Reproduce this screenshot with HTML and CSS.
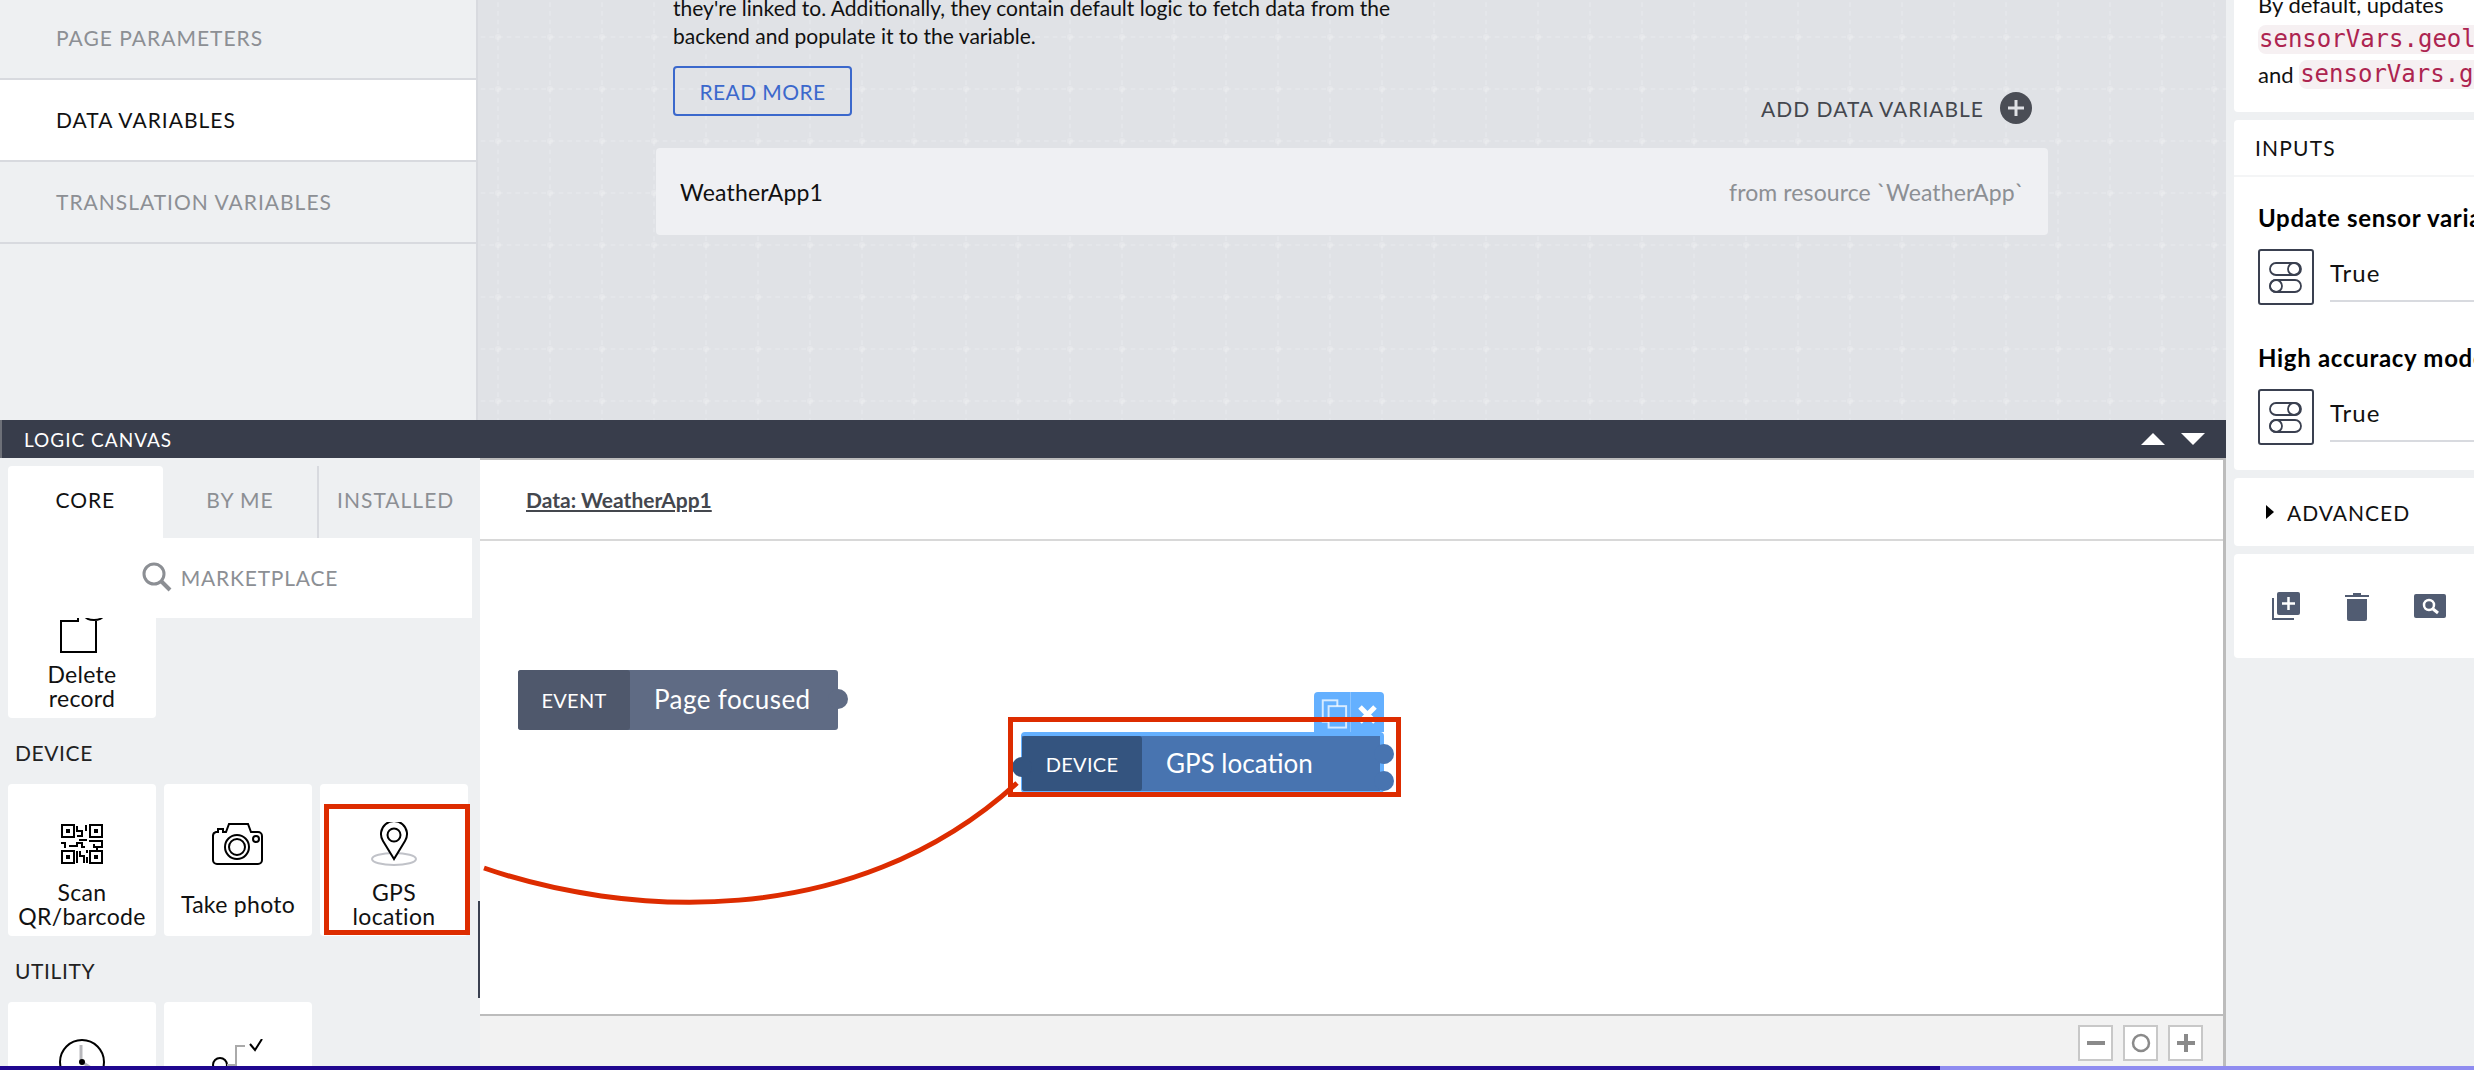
FILE: index.html
```html
<!DOCTYPE html>
<html lang="en">
<head>
    <meta charset="UTF-8">
    <title>Logic canvas</title>
    <link rel="stylesheet" href="styles.css">
</head>
<body>
<div class="app">
    <div class="main-col">
        <div class="top-area">
            <div class="sidebar">
                <div class="side-row">Page parameters</div>
                <div class="side-row active">Data variables</div>
                <div class="side-row">Translation variables</div>
            </div>
            <div class="content">
                <p class="intro">they're linked to. Additionally, they contain default logic to fetch data from the<br>backend and populate it to the variable.</p>
                <a class="read-more">READ MORE</a>
                <div class="add-var">
                    <span>ADD DATA VARIABLE</span>
                    <svg width="32" height="32" viewBox="0 0 32 32"><circle cx="16" cy="16" r="16" fill="#4a4d55"/><path d="M16 8v16M8 16h16" stroke="#e0e2e6" stroke-width="3"/></svg>
                </div>
                <div class="var-row">
                    <span class="var-name">WeatherApp1</span>
                    <span class="var-from">from resource `WeatherApp`</span>
                </div>
            </div>
        </div>

        <div class="logic-head">
            <span>LOGIC CANVAS</span>
            <div class="head-arrows"><i class="tri-up"></i><i class="tri-down"></i></div>
        </div>

        <div class="logic-body">
            <div class="palette">
                <div class="tabs">
                    <div class="tab current">CORE</div>
                    <div class="tab">BY ME</div>
                    <div class="tab sep">INSTALLED</div>
                </div>
                <div class="market">
                    <svg width="30" height="30" viewBox="0 0 30 30"><circle cx="12" cy="12" r="10" fill="none" stroke="#8c8f94" stroke-width="3"/><path d="M19 19l9 9" stroke="#8c8f94" stroke-width="4"/></svg>
                    <span>MARKETPLACE</span>
                </div>
                <div class="pal-list">
                    <div class="cards first">
                        <div class="card">
                            <div class="card-icon">
                                <svg width="44" height="54" viewBox="0 0 44 54" fill="none" stroke="#000" stroke-width="2"><path d="M18 16v6H1v31h35V22"/><path d="M25 17a9 4 0 0 0 18 0"/></svg>
                            </div>
                            <div class="card-label">Delete<br>record</div>
                        </div>
                    </div>
                    <div class="pal-title">DEVICE</div>
                    <div class="cards">
                        <div class="card">
                            <div class="card-icon">
                                <svg width="42" height="40" viewBox="0 0 42 40" fill="none" stroke="#000" stroke-width="2">
                                    <rect x="1" y="1" width="12" height="12"/><rect x="29" y="1" width="12" height="12"/><rect x="1" y="27" width="12" height="12"/><rect x="29" y="27" width="12" height="12"/>
                                    <path d="M5 5h4v4H5zM33 5h4v4h-4zM5 31h4v4H5zM33 31h4v4h-4z" fill="#000" stroke="none"/>
                                    <path d="M16 2v5h5v5h-5M25 1v6M18 16h8M0 19h4v5M8 22h8v-3h5v4h3M28 17h13v6h-8v-3M36 23v3M16 27v12M19 27v5h4v7M26 26v3M26 33v6"/>
                                </svg>
                            </div>
                            <div class="card-label">Scan<br>QR/barcode</div>
                        </div>
                        <div class="card">
                            <div class="card-icon">
                                <svg width="52" height="42" viewBox="0 0 52 42" fill="none" stroke="#000" stroke-width="2">
                                    <path d="M4 9h2V6h5v3h3l3-8h19l3 8h7a4 4 0 0 1 4 4v24a4 4 0 0 1-4 4H5a4 4 0 0 1-4-4V13a4 4 0 0 1 3-4z"/>
                                    <circle cx="25" cy="24" r="12"/><circle cx="25" cy="24" r="8"/><circle cx="44" cy="16" r="3"/>
                                </svg>
                            </div>
                            <div class="card-label">Take photo</div>
                        </div>
                        <div class="card">
                            <div class="card-icon">
                                <svg width="46" height="44" viewBox="0 0 46 44" fill="none">
                                    <ellipse cx="23" cy="37" rx="22" ry="6" stroke="#c0c2c8" stroke-width="2"/>
                                    <path d="M23 37L12 19a13 13 0 1 1 22 0z" fill="#fff" stroke="#000" stroke-width="2"/>
                                    <circle cx="23" cy="13" r="6.5" stroke="#000" stroke-width="2"/>
                                </svg>
                            </div>
                            <div class="card-label">GPS<br>location</div>
                        </div>
                    </div>
                    <div class="pal-title">UTILITY</div>
                    <div class="cards">
                        <div class="card">
                            <div class="card-icon">
                                <svg width="46" height="46" viewBox="0 0 46 46" fill="none"><circle cx="23" cy="23" r="22" stroke="#000" stroke-width="2"/><path d="M22 6v17" stroke="#b8b8bc" stroke-width="3"/><path d="M23 23l12 8" stroke="#b8b8bc" stroke-width="3"/><circle cx="23" cy="23" r="3" fill="#000"/></svg>
                            </div>
                            <div class="card-label"></div>
                        </div>
                        <div class="card">
                            <div class="card-icon">
                                <svg width="52" height="46" viewBox="0 0 52 46" fill="none"><circle cx="8" cy="26" r="7" stroke="#000" stroke-width="2"/><path d="M15 26h9V7h9" stroke="#aaa" stroke-width="2"/><path d="M38 5l5 6 7-11" stroke="#000" stroke-width="2"/></svg>
                            </div>
                            <div class="card-label"></div>
                        </div>
                    </div>
                </div>
                <div class="pal-scroll"></div>
            </div>

            <div class="canvas">
                <div class="crumb"><a>Data: WeatherApp1</a></div>
                <div class="board">
                    <div class="node node-event">
                        <div class="node-type">EVENT</div>
                        <div class="node-name">Page focused</div>
                        <i class="port port-out"></i>
                    </div>
                    <div class="node-wrap">
                        <div class="node-tools">
                            <svg width="37" height="40" viewBox="0 0 37 40" fill="none" stroke="#fff" stroke-opacity=".75" stroke-width="2"><rect x="9" y="8" width="15" height="22"/><rect x="15" y="14" width="18" height="22" fill="#64b0ff"/></svg>
                            <svg width="33" height="40" viewBox="0 0 33 40"><path d="M9 15l15 15M24 15L9 30" stroke="#fff" stroke-width="5"/></svg>
                        </div>
                        <div class="node node-device">
                            <i class="port port-in"></i>
                            <div class="node-type">DEVICE</div>
                            <div class="node-name">GPS location</div>
                            <i class="port port-a"></i>
                            <i class="port port-b"></i>
                        </div>
                    </div>
                </div>
                <div class="zoom-bar">
                    <button class="zoom-btn"><svg width="20" height="20" viewBox="0 0 20 20"><path d="M1 10h18" stroke="#8a8a8a" stroke-width="4"/></svg></button>
                    <button class="zoom-btn"><svg width="20" height="20" viewBox="0 0 20 20"><circle cx="10" cy="10" r="8" fill="none" stroke="#8a8a8a" stroke-width="2.5"/></svg></button>
                    <button class="zoom-btn"><svg width="20" height="20" viewBox="0 0 20 20"><path d="M1 10h18M10 1v18" stroke="#8a8a8a" stroke-width="4"/></svg></button>
                </div>
            </div>
        </div>
    </div>

    <div class="props">
        <div class="prop-card doc">
            <div class="doc-line">By default, updates</div>
            <div class="doc-line"><code>sensorVars.geolocationLatitude</code></div>
            <div class="doc-line">and <code>sensorVars.geolocationLongitude</code></div>
        </div>
        <div class="prop-card">
            <div class="prop-head">INPUTS</div>
            <div class="inputs">
                <div class="field-title">Update sensor variables</div>
                <div class="field">
                    <span class="bind-btn"><svg width="34" height="34" viewBox="0 0 34 34" fill="none" stroke="#3a4050" stroke-width="1.8"><rect x="1" y="3" width="31" height="12" rx="6"/><circle cx="25" cy="9" r="6"/><rect x="1" y="20" width="31" height="12" rx="6"/><circle cx="7" cy="26" r="6"/></svg></span>
                    <span class="field-val">True</span>
                </div>
                <div class="field-title second">High accuracy mode</div>
                <div class="field">
                    <span class="bind-btn"><svg width="34" height="34" viewBox="0 0 34 34" fill="none" stroke="#3a4050" stroke-width="1.8"><rect x="1" y="3" width="31" height="12" rx="6"/><circle cx="25" cy="9" r="6"/><rect x="1" y="20" width="31" height="12" rx="6"/><circle cx="7" cy="26" r="6"/></svg></span>
                    <span class="field-val">True</span>
                </div>
            </div>
        </div>
        <div class="prop-card advanced"><i class="tri-right"></i>ADVANCED</div>
        <div class="prop-card actions">
            <svg width="28" height="28" viewBox="0 0 28 28"><path d="M1 6v21h21" fill="none" stroke="#515c72" stroke-width="2"/><rect x="5" y="0" width="23" height="23" rx="2" fill="#515c72"/><path d="M16.500 5v13M10 11.500h13" stroke="#fff" stroke-width="2.500"/></svg>
            <svg width="24" height="30" viewBox="0 0 24 30"><path d="M0 4h24v2H0zM8 2h8v2H8z" fill="#515c72"/><path d="M2 8h20v20a2 2 0 0 1-2 2H4a2 2 0 0 1-2-2z" fill="#515c72"/></svg>
            <svg width="32" height="24" viewBox="0 0 32 24"><rect width="32" height="24" rx="2" fill="#515c72"/><circle cx="15" cy="11" r="5" fill="none" stroke="#fff" stroke-width="2.500"/><path d="M19 15l5 4" stroke="#fff" stroke-width="3"/></svg>
        </div>
    </div>
</div>

<!-- tutorial annotations drawn over the app -->
<div class="mark mark-gps"></div>
<div class="mark mark-node"></div>
<svg class="mark-line" width="2474" height="1070" viewBox="0 0 2474 1070"><path d="M484 868C620 915 850 935 1017 783" fill="none" stroke="#dd2c00" stroke-width="5"/></svg>
<div class="load-bar"></div>
</body>
</html>
```

FILE: styles.css
```css
* {
    box-sizing: border-box;
}

html, body {
    margin: 0;
    height: 100%;
    overflow: hidden;
}

body {
    font-family: 'Lato', 'Liberation Sans', sans-serif;
    font-size: 21px;
    color: #111;
    background-color: #eef0f2;
    position: relative;
}

.app {
    display: flex;
    width: 2474px;
    height: 1070px;
}

.main-col {
    width: 2226px;
    display: flex;
    flex-direction: column;
    flex-shrink: 0;
}

/* top part: tabs and variable list */
.top-area {
    height: 420px;
    display: flex;
    overflow: hidden;
}

.sidebar {
    width: 478px;
    background-color: #eef0f2;
    border-right: 2px solid #d8dadf;
    flex-shrink: 0;
}

.side-row {
    height: 82px;
    padding: 0 0 2px 56px;
    display: flex;
    align-items: center;
    text-transform: uppercase;
    font-size: 21px;
    letter-spacing: 1px;
    color: #8c8f94;
    border-bottom: 2px solid #d8dadf;
}

.side-row:first-child {
    margin-top: -2px;
}

.side-row.active {
    background-color: #fff;
    color: #111;
}

.content {
    flex: 1;
    padding-left: 178px;
    padding-right: 178px;
    background-color: #e0e2e6;
    background-image: url("data:image/svg+xml,%3Csvg xmlns='http://www.w3.org/2000/svg' width='52' height='52'%3E%3Cg stroke='%23fff' stroke-opacity='.14' stroke-width='2' fill='none'%3E%3Cpath d='M0 26H52M26 0V52' stroke-dasharray='4.670 4'/%3E%3C/g%3E%3Ccircle cx='26' cy='26' r='3' fill='%23fff' fill-opacity='.18'/%3E%3C/svg%3E");
    background-size: 52px 52px;
    background-position: -6px 11px;
}

.intro {
    margin: -6px 0 0 17px;
    font-size: 21px;
    line-height: 28px;
    white-space: nowrap;
}

.read-more {
    display: flex;
    align-items: center;
    justify-content: center;
    width: 179px;
    height: 50px;
    margin: 16px 0 0 17px;
    border: 2px solid #3b68cc;
    border-radius: 4px;
    color: #3b68cc;
    font-size: 21px;
    letter-spacing: .4px;
}

.add-var {
    display: flex;
    align-items: center;
    justify-content: flex-end;
    gap: 16px;
    height: 32px;
    margin: -24px 16px 0 0;
    font-size: 21px;
    letter-spacing: 1px;
    color: #44474e;
}

.var-row {
    display: flex;
    align-items: center;
    justify-content: space-between;
    height: 87px;
    margin-top: 24px;
    padding: 0 24px;
    background-color: #eff0f3;
    border-radius: 4px;
}

.var-name {
    font-size: 23px;
    letter-spacing: .2px;
}

.var-from {
    font-size: 23px;
    letter-spacing: .1px;
    color: #8c8f94;
}

/* logic canvas */
.logic-head {
    height: 38px;
    background-color: #383d4b;
    border-left: 2px solid #6d7078;
    color: #fff;
    font-size: 19px;
    letter-spacing: 1px;
    padding: 0 21px 0 22px;
    display: flex;
    align-items: center;
    justify-content: space-between;
}

.head-arrows {
    display: flex;
    gap: 16px;
}

.tri-up {
    width: 0;
    height: 0;
    border-left: 12px solid transparent;
    border-right: 12px solid transparent;
    border-bottom: 12px solid #fff;
}

.tri-down {
    width: 0;
    height: 0;
    border-left: 12px solid transparent;
    border-right: 12px solid transparent;
    border-top: 12px solid #fff;
}

.logic-body {
    flex: 1;
    display: flex;
    min-height: 0;
}

.palette {
    width: 480px;
    flex-shrink: 0;
    background-color: #eef0f2;
    padding: 8px 8px 0 8px;
    display: flex;
    flex-direction: column;
    position: relative;
    overflow: hidden;
}

.tabs {
    display: flex;
    height: 72px;
    flex-shrink: 0;
}

.tab {
    width: 155px;
    padding-bottom: 6px;
    display: flex;
    align-items: center;
    justify-content: center;
    font-size: 21px;
    letter-spacing: 1px;
    color: #8c8f94;
}

.tab.current {
    background-color: #fff;
    color: #111;
    border-radius: 4px 4px 0 0;
}

.tab.sep {
    border-left: 2px solid #d8dadf;
}

.market {
    height: 80px;
    padding-bottom: 2px;
    flex-shrink: 0;
    background-color: #fff;
    display: flex;
    align-items: center;
    justify-content: center;
    gap: 9px;
    color: #8c8f94;
    font-size: 21px;
    letter-spacing: .8px;
    position: relative;
    z-index: 1;
}

.pal-list {
    flex: 1;
    min-height: 0;
}

.cards {
    display: grid;
    grid-template-columns: repeat(3, 148px);
    gap: 8px;
}

.cards.first {
    margin-top: -52px;
}

.card {
    height: 152px;
    background-color: #fff;
    border-radius: 4px;
    padding: 24px 2px 8px 2px;
    display: flex;
    flex-direction: column;
    align-items: center;
}

.card-icon {
    height: 72px;
    display: flex;
    align-items: center;
    justify-content: center;
}

.card-label {
    height: 48px;
    display: flex;
    align-items: center;
    text-align: center;
    font-size: 23px;
    letter-spacing: .3px;
    line-height: 24px;
    color: #111;
}

.pal-title {
    height: 66px;
    padding: 3px 0 0 7px;
    display: flex;
    align-items: center;
    font-size: 21px;
    letter-spacing: .6px;
    color: #222;
}

.pal-scroll {
    position: absolute;
    right: 0;
    top: 443px;
    width: 2px;
    height: 97px;
    background-color: #3a4050;
}

.canvas {
    flex: 1;
    display: flex;
    flex-direction: column;
    background-color: #fff;
    border-top: 2px solid #bcbcbc;
    border-right: 3px solid #bcbcbc;
}

.crumb {
    height: 81px;
    flex-shrink: 0;
    padding-left: 46px;
    display: flex;
    align-items: center;
    border-bottom: 2px solid #d8d8d8;
    font-size: 21px;
    font-weight: 700;
    color: #44474e;
}

.crumb a {
    text-decoration: underline;
}

.board {
    flex: 1;
    position: relative;
}

.node {
    display: flex;
    position: relative;
    color: #fff;
    border-radius: 3px;
}

.node-event {
    position: absolute;
    left: 38px;
    top: 129px;
    width: 320px;
    height: 60px;
    background-color: #5f6b84;
}

.node-type {
    display: flex;
    align-items: center;
    justify-content: center;
    font-size: 20px;
    letter-spacing: .3px;
    border-radius: 3px;
}

.node-name {
    display: flex;
    align-items: center;
    font-size: 26px;
    padding-bottom: 2px;
}

.node-event .node-type {
    width: 112px;
    background-color: #4f586c;
}

.node-event .node-name {
    padding-left: 24px;
    letter-spacing: .4px;
}

.port {
    position: absolute;
    width: 20px;
    height: 20px;
    border-radius: 50%;
}

.port-out {
    right: -10px;
    top: 19px;
    background-color: #5f6b84;
}

.node-wrap {
    position: absolute;
    left: 541px;
    top: 151px;
    width: 363px;
}

.node-tools {
    margin-left: 293px;
    width: 70px;
    height: 40px;
    background-color: #64b0ff;
    border-radius: 4px 4px 0 0;
    display: flex;
}

.node-tools svg:first-child {
    border-right: 1px solid #8cc4ff;
}

.node-device {
    height: 61px;
    background-color: #4874b0;
    border: solid #64b0ff;
    border-width: 4px 4px 2px 1px;
    border-radius: 4px;
}

.node-device .node-type {
    width: 120px;
    background-color: #34547f;
}

.node-device .node-name {
    padding-left: 24px;
}

.port-in {
    left: -10px;
    top: 21px;
    background-color: #34547f;
}

.port-a {
    right: -14px;
    top: 8px;
    background-color: #4874b0;
}

.port-b {
    right: -14px;
    top: 35px;
    background-color: #4874b0;
}

.zoom-bar {
    height: 56px;
    flex-shrink: 0;
    background-color: #f2f2f2;
    border-top: 2px solid #bcbcbc;
    padding: 9px 20px 0 0;
    display: flex;
    justify-content: flex-end;
    gap: 10px;
}

.zoom-btn {
    width: 35px;
    height: 36px;
    padding: 0;
    background-color: #fff;
    border: 2px solid #c8c8c8;
    display: flex;
    align-items: center;
    justify-content: center;
}

/* right panel */
.props {
    flex: 1;
    min-width: 0;
    padding-left: 8px;
    overflow: hidden;
    white-space: nowrap;
}

.prop-card {
    width: 400px;
    background-color: #fff;
    margin-bottom: 8px;
    border-radius: 4px;
}

.doc {
    height: 125px;
    margin-top: -13px;
    padding-left: 24px;
    font-size: 22px;
}

.doc-line {
    height: 35px;
    line-height: 35px;
}

code {
    display: inline-block;
    height: 29px;
    padding: 0 1px;
    font-family: 'DejaVu Sans Mono', monospace;
    font-size: 24px;
    line-height: 29px;
    vertical-align: top;
    margin-top: 3px;
    color: #ad2450;
    background-color: #f6f0f2;
    border-radius: 8px;
}

.prop-head {
    height: 57px;
    padding-left: 21px;
    display: flex;
    align-items: center;
    font-size: 21px;
    letter-spacing: 1.200px;
    border-bottom: 2px solid #f4f5f6;
}

.inputs {
    padding: 27px 0 0 24px;
    height: 293px;
}

.field-title {
    font-size: 24px;
    font-weight: 700;
    letter-spacing: .7px;
    line-height: 28px;
    color: #000;
}

.field-title.second {
    margin-top: 39px;
}

.field {
    display: flex;
    margin-top: 17px;
}

.bind-btn {
    width: 56px;
    height: 56px;
    flex-shrink: 0;
    border: 2px solid #3a4050;
    border-radius: 3px;
    display: flex;
    align-items: center;
    justify-content: center;
}

.field-val {
    flex: 1;
    margin-left: 16px;
    height: 53px;
    padding-top: 9px;
    font-size: 24px;
    letter-spacing: 1px;
    border-bottom: 2px solid #d8dadf;
}

.advanced {
    height: 68px;
    padding-left: 32px;
    display: flex;
    align-items: center;
    font-size: 21px;
    letter-spacing: 1px;
}

.tri-right {
    width: 0;
    height: 0;
    margin-right: 13px;
    border-top: 7px solid transparent;
    border-bottom: 7px solid transparent;
    border-left: 8px solid #000;
}

.actions {
    height: 104px;
    padding: 0 0 0 38px;
    display: flex;
    align-items: center;
    gap: 45px;
}

/* annotations */
.mark {
    position: absolute;
    border: 5px solid #dd2c00;
}

.mark-gps {
    left: 324px;
    top: 804px;
    width: 146px;
    height: 131px;
}

.mark-node {
    left: 1008px;
    top: 717px;
    width: 393px;
    height: 80px;
}

.mark-line {
    position: absolute;
    left: 0;
    top: 0;
    pointer-events: none;
}

.load-bar {
    position: absolute;
    left: 0;
    right: 0;
    bottom: 0;
    height: 4px;
    background: linear-gradient(90deg, #20078f 1940px, #8f8cf0 1940px);
}
```
